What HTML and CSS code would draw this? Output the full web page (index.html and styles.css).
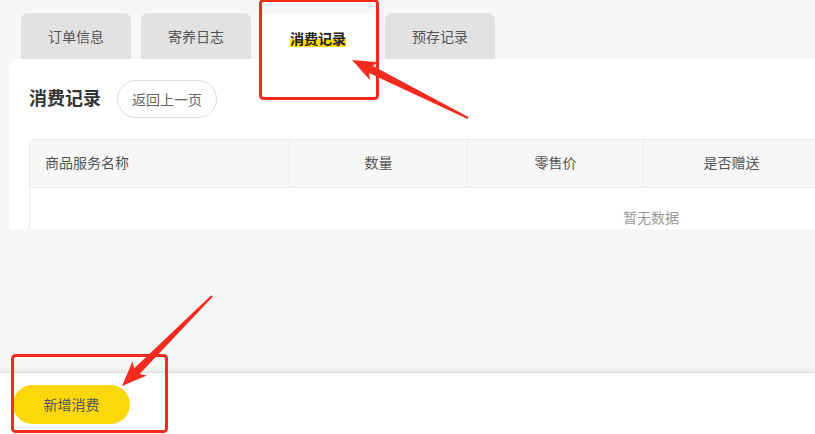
FILE: index.html
```html
<!DOCTYPE html>
<html lang="zh-CN">
<head>
<meta charset="utf-8">
<title>消费记录</title>
<link rel="stylesheet" href="styles.css">
</head>
<body>
<div class="page">
  <main class="main">
    <nav class="tabs">
      <div class="tab">订单信息</div>
      <div class="tab">寄养日志</div>
      <div class="tab tab-active"><span class="mark">消费记录</span></div>
      <div class="tab">预存记录</div>
    </nav>
    <section class="panel">
      <div class="panel-head">
        <h2 class="title">消费记录</h2>
        <button class="back-btn">返回上一页</button>
      </div>
      <div class="table">
        <div class="thead">
          <div class="th th-name">商品服务名称</div>
          <div class="th th-qty">数量</div>
          <div class="th th-price">零售价</div>
          <div class="th th-gift">是否赠送</div>
          <div class="th th-rest"></div>
        </div>
        <div class="tbody">
          <div class="empty">暂无数据</div>
        </div>
      </div>
    </section>
  </main>
  <footer class="footer">
    <button class="add-btn">新增消费</button>
  </footer>
</div>
<svg class="annot" width="815" height="434" viewBox="0 0 815 434">
  <rect x="260.5" y="0.5" width="117" height="98" rx="3" fill="none" stroke="#f42a1f" stroke-width="3"/>
  <rect x="12.5" y="355.5" width="154" height="76" rx="3" fill="none" stroke="#f42a1f" stroke-width="3"/>
  <polygon fill="#f42a1f" points="352,60 378.9,62.3 372.6,65.8 468.4,117.1 467.6,118.9 369,73 369.9,80.1"/>
  <polygon fill="#f42a1f" points="122,386 146.8,375.4 139.6,374 212.7,296.7 211.3,295.3 134,368.4 132.6,361.2"/>
</svg>
</body>
</html>
```
FILE: styles.css
```css
* { box-sizing: border-box; }
html, body {
  margin: 0;
  padding: 0;
  width: 815px;
  height: 434px;
  overflow: hidden;
  background: #f7f7f7;
  font-family: "Noto Sans CJK SC", "Noto Sans", sans-serif;
  font-size: 14px;
  color: #333;
}
.page {
  width: 815px;
  height: 434px;
  display: flex;
  flex-direction: column;
}
.main {
  flex: 1;
  padding: 13px 0 0 9px;
  overflow: hidden;
}
.tabs {
  display: flex;
  padding-left: 12px;
  gap: 10px;
  height: 46px;
}
.tab {
  width: 110px;
  height: 46px;
  background: #e2e2e2;
  border-radius: 7px 7px 0 0;
  display: flex;
  align-items: center;
  justify-content: center;
  color: #555;
  font-size: 14px;
}
.tab-active {
  width: 114px;
  background: #fff;
  color: #222;
  font-weight: bold;
}
.mark {
  display: inline-block;
  line-height: 17px;
  padding-top: 1px;
  margin-top: 4px;
  background: linear-gradient(to bottom, transparent 0, transparent 54%, #ffd800 54%, #ffd800 100%);
}
.panel {
  width: 1300px;
  height: 170px;
  background: #fff;
  border-radius: 8px 0 0 0;
  overflow: hidden;
  padding: 21px 0 0 20px;
}
.panel-head {
  display: flex;
  align-items: center;
  height: 38px;
}
.title {
  margin: 0;
  font-size: 18px;
  line-height: 24px;
  padding-bottom: 5px;
  font-weight: bold;
  color: #333;
  width: 88px;
}
.back-btn {
  width: 100px;
  height: 38px;
  border: 1px solid #dcdcdc;
  border-radius: 19px;
  background: #fff;
  font-family: inherit;
  font-size: 14px;
  color: #666;
  padding: 0 0 1px;
}
.table {
  margin-top: 21px;
  width: 1244px;
  border: 1px solid #ebebeb;
  border-radius: 4px 0 0 0;
}
.thead {
  display: flex;
  height: 48px;
  background: #f7f7f7;
  border-bottom: 1px solid #ebebeb;
  color: #555;
}
.th {
  display: flex;
  align-items: center;
  justify-content: center;
  border-right: 1px solid #ebebeb;
  padding-bottom: 3px;
}
.th-name { width: 260px; justify-content: flex-start; padding-left: 15px; }
.th-qty { width: 178px; }
.th-price { width: 176px; }
.th-gift { width: 176px; }
.th-rest { flex: 1; border-right: none; }
.tbody {
  height: 60px;
  display: flex;
  justify-content: center;
  padding-top: 19px;
}
.empty {
  color: #999;
  font-size: 14px;
  line-height: 20px;
}
.footer {
  height: 62px;
  background: #fff;
  border-top: 1px solid #dedede;
  box-shadow: 0 -3px 4px rgba(0, 0, 0, 0.05);
  display: flex;
  align-items: center;
  padding: 0 0 0 13px;
}
.add-btn {
  width: 117px;
  height: 39px;
  border: none;
  border-radius: 20px;
  background: #fcd70a;
  color: #555;
  font-family: inherit;
  font-size: 14px;
  margin-top: 1px;
}
.annot {
  position: absolute;
  left: 0;
  top: 0;
  pointer-events: none;
}
```
